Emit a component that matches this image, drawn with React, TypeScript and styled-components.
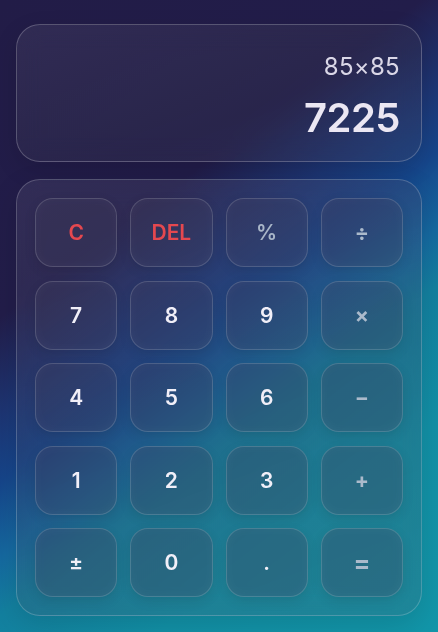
import React from "react";
import styled, { createGlobalStyle } from "styled-components";

const Global = createGlobalStyle`
  html, body { margin: 0; padding: 0; height: 100%; }
  body {
    width: 438px;
    height: 632px;
    overflow: hidden;
    background: linear-gradient(143deg, #221c47 0%, #221d4a 33%, #1d3573 43%, #16458a 50%, #1569a0 58%, #13809f 64%, #1290a6 78%, #1296a9 100%);
    font-family: Inter, "Noto Sans", sans-serif;
  }
  #root { height: 100%; }
`;

const Page = styled.div`
  box-sizing: border-box;
  height: 632px;
  padding: 24px 16px 16px;
  display: flex;
  flex-direction: column;
  gap: 17px;
`;

const Display = styled.div`
  box-sizing: border-box;
  height: 138px;
  border-radius: 24px;
  background: linear-gradient(160deg, rgba(80, 76, 110, 0.32) 0%, rgba(58, 56, 80, 0.3) 60%, rgba(60, 66, 95, 0.28) 100%);
  border: 1px solid rgba(255, 255, 255, 0.22);
  box-shadow: 0 8px 24px rgba(0, 0, 0, 0.12);
  backdrop-filter: blur(12px);
  display: flex;
  flex-direction: column;
  align-items: flex-end;
  justify-content: flex-end;
  padding: 0 21px 21px;
  gap: 15px;
`;

const Expression = styled.div`
  font-family: Inter, sans-serif;
  font-size: 24px;
  font-weight: 400;
  color: #dad7e7;
  line-height: 28px;
  letter-spacing: 0.3px;
`;

const Result = styled.div`
  font-family: Inter, sans-serif;
  font-size: 40px;
  font-weight: 600;
  color: #ebe7f3;
  line-height: 44px;
  letter-spacing: -0.5px;
`;

const Keypad = styled.div`
  box-sizing: border-box;
  flex: 1;
  border-radius: 24px;
  background: linear-gradient(160deg, rgba(85, 80, 115, 0.32) 0%, rgba(62, 64, 90, 0.26) 50%, rgba(70, 90, 105, 0.24) 100%);
  border: 1px solid rgba(255, 255, 255, 0.2);
  box-shadow: 0 10px 30px rgba(0, 0, 0, 0.12);
  backdrop-filter: blur(12px);
  padding: 18px;
  display: grid;
  grid-template-columns: repeat(4, 1fr);
  grid-auto-rows: 69px;
  column-gap: 13px;
  row-gap: 13.5px;
`;

type Kind = "num" | "op" | "danger" | "fn";

const colors: Record<Kind, string> = {
  num: "#f1eff8",
  op: "#abbacb",
  danger: "#e5484f",
  fn: "#a9b6c8",
};

const Key = styled.button<{ $kind: Kind; $big?: boolean }>`
  box-sizing: border-box;
  border-radius: 18px;
  border: 1px solid rgba(255, 255, 255, 0.16);
  background: rgba(62, 60, 88, 0.3);
  box-shadow: 0 4px 12px rgba(0, 0, 0, 0.1), inset 0 0 14px rgba(255, 255, 255, 0.035);
  color: ${(p) => colors[p.$kind]};
  font-family: Inter, sans-serif;
  font-size: ${(p) => (p.$big ? "25px" : "21px")};
  font-weight: ${(p) => (p.$kind === "op" ? 700 : 600)};
  display: flex;
  align-items: center;
  justify-content: center;
  padding: 0;
  cursor: pointer;
`;

const keys: { label: string; kind: Kind; big?: boolean }[] = [
  { label: "C", kind: "danger" },
  { label: "DEL", kind: "danger" },
  { label: "%", kind: "fn" },
  { label: "÷", kind: "op" },
  { label: "7", kind: "num" },
  { label: "8", kind: "num" },
  { label: "9", kind: "num" },
  { label: "×", kind: "op" },
  { label: "4", kind: "num" },
  { label: "5", kind: "num" },
  { label: "6", kind: "num" },
  { label: "−", kind: "op" },
  { label: "1", kind: "num" },
  { label: "2", kind: "num" },
  { label: "3", kind: "num" },
  { label: "+", kind: "op" },
  { label: "±", kind: "num" },
  { label: "0", kind: "num" },
  { label: ".", kind: "num" },
  { label: "=", kind: "op", big: true },
];

export default function App() {
  return (
    <>
      <Global />
      <Page>
        <Display>
          <Expression>85×85</Expression>
          <Result>7225</Result>
        </Display>
        <Keypad>
          {keys.map((k) => (
            <Key key={k.label} $kind={k.kind} $big={k.big}>
              {k.label}
            </Key>
          ))}
        </Keypad>
      </Page>
    </>
  );
}
